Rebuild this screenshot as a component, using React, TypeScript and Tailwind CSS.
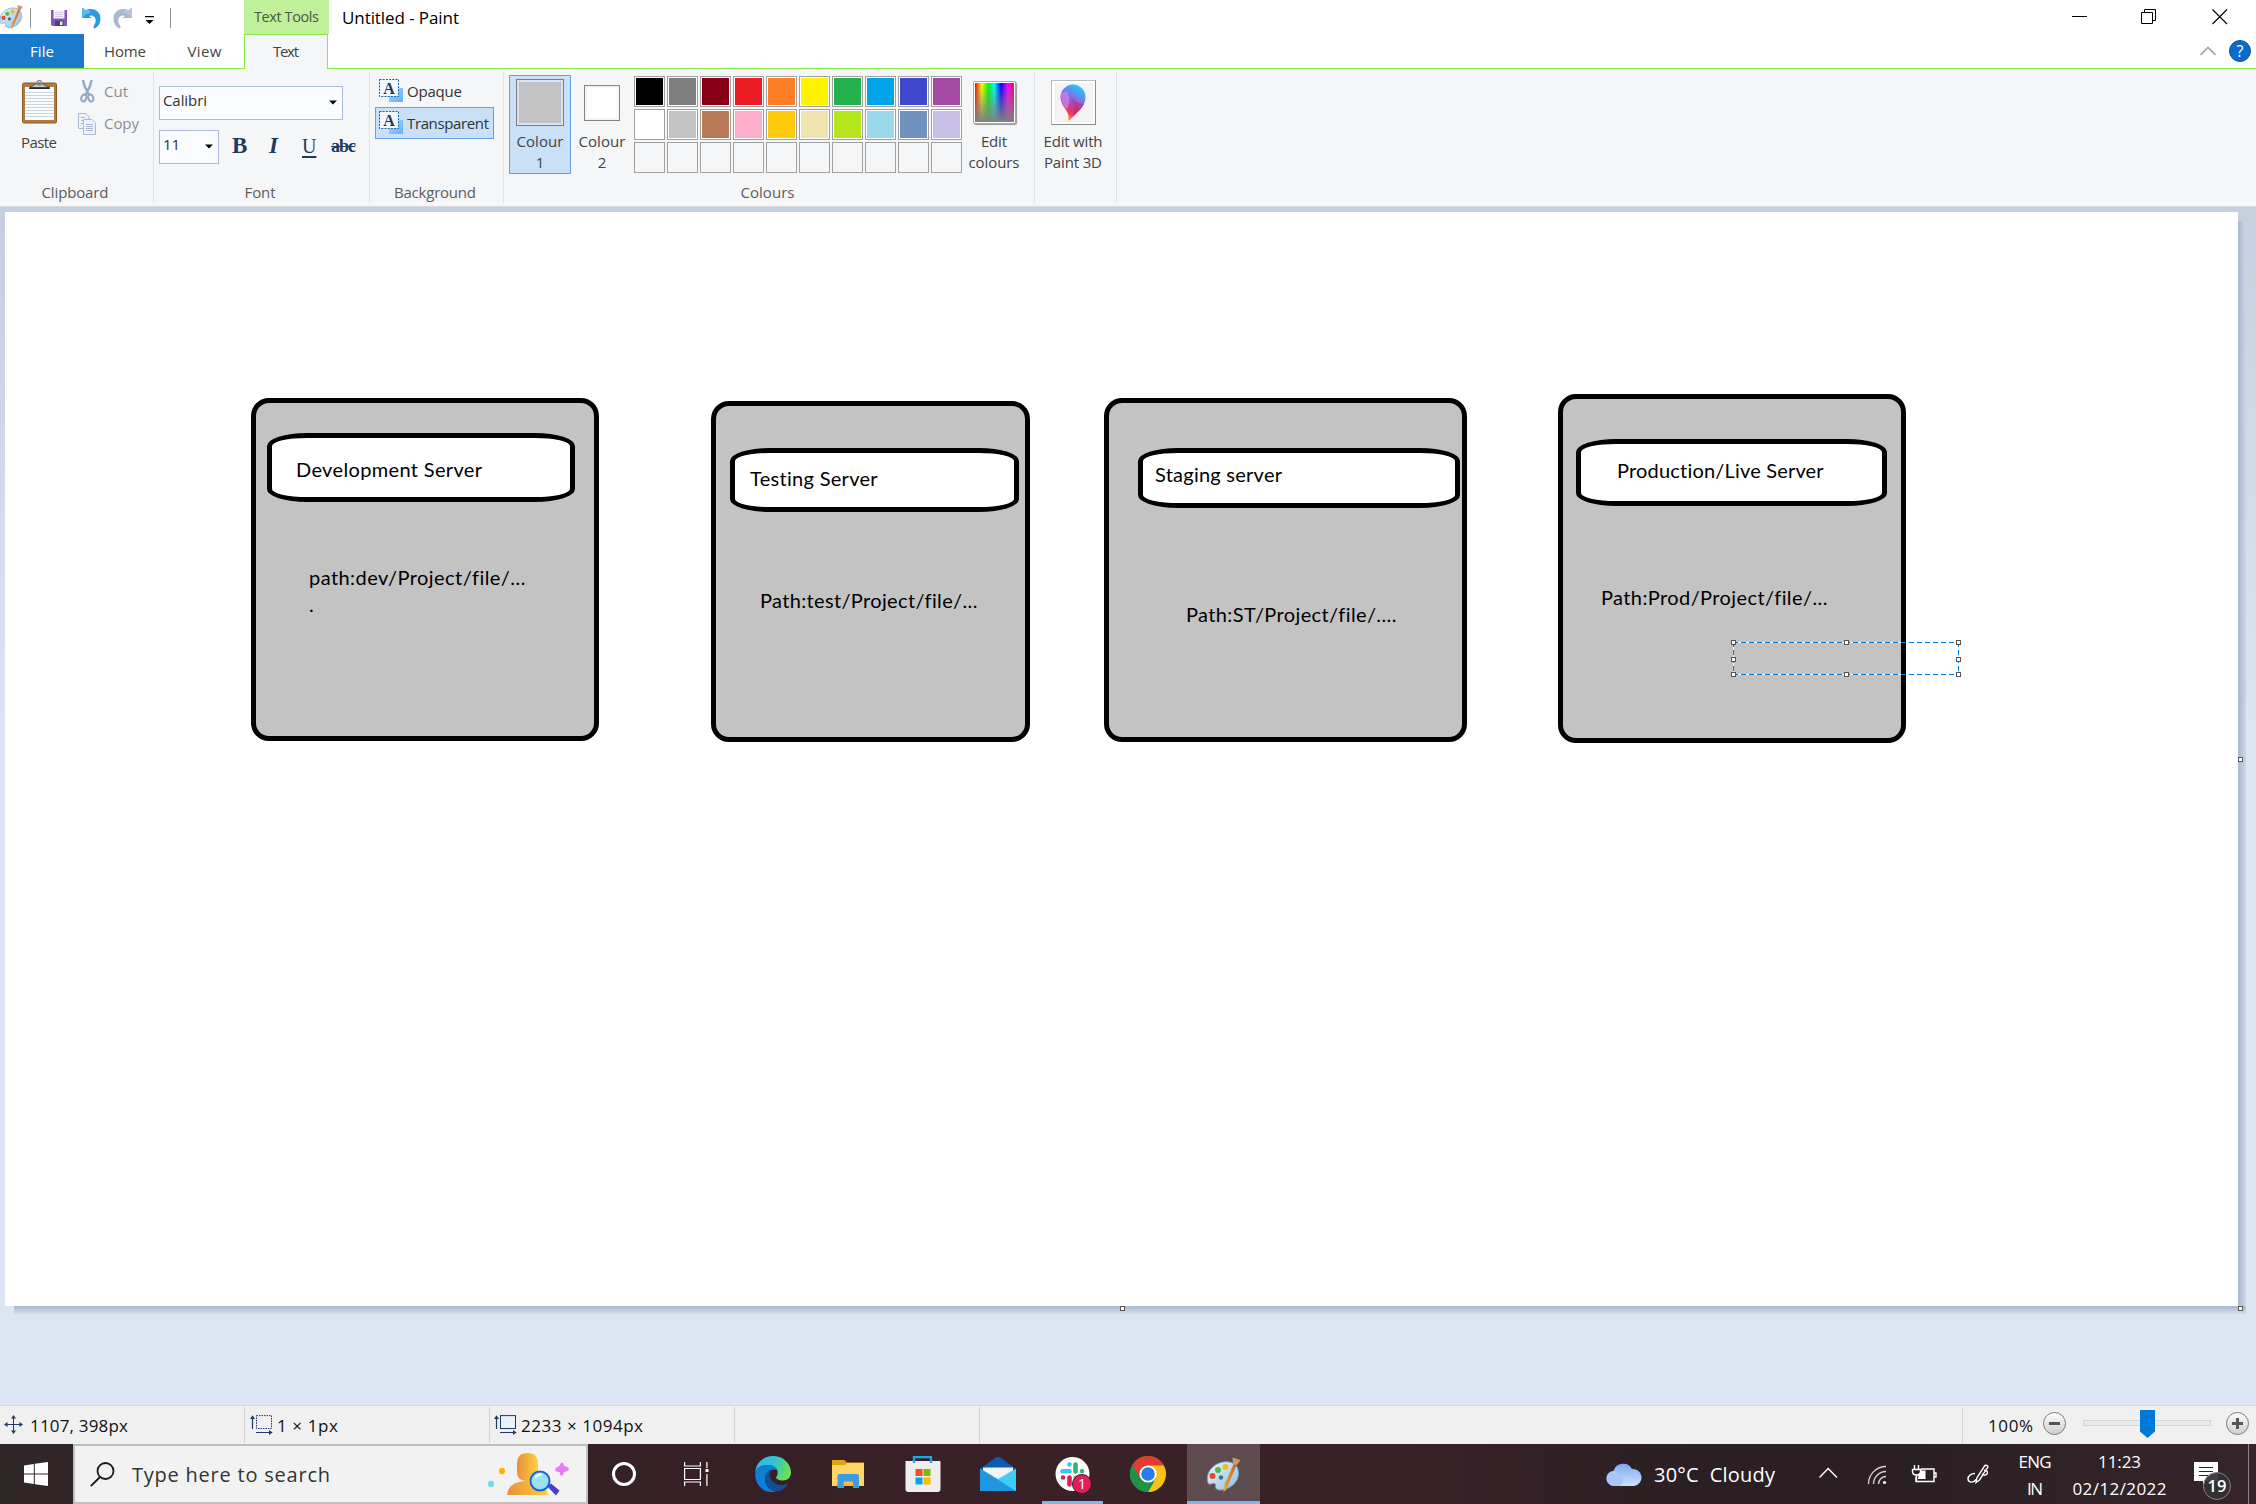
import { useLayoutEffect, useRef, type ReactNode } from "react";

/* Text whose letter spacing is computed so that the run fills a given width. */
function Fit({ w, children, className = "" }: { w: number; children: string; className?: string }) {
  const ref = useRef<HTMLSpanElement>(null);
  useLayoutEffect(() => {
    const el = ref.current;
    if (!el) return;
    el.style.letterSpacing = "0px";
    const natural = el.getBoundingClientRect().width;
    const gaps = Math.max(1, children.length - 1);
    const s = (w - natural) / gaps;
    el.style.letterSpacing = `${s}px`;
    el.style.marginRight = `${-s}px`;
  }, [w, children]);
  return (
    <span ref={ref} className={`inline-block whitespace-pre ${className}`}>
      {children}
    </span>
  );
}

function PaletteIcon({ className }: { className: string }) {
  return (
    <svg viewBox="0 0 36 36" className={className}>
      <defs>
        <linearGradient id="pal" x1="0" y1="0" x2="1" y2="1">
          <stop offset="0" stopColor="#eaf6fd" />
          <stop offset="1" stopColor="#8fc0e0" />
        </linearGradient>
        <linearGradient id="brush" x1="0" y1="0" x2="1" y2="0">
          <stop offset="0" stopColor="#f6a440" />
          <stop offset="1" stopColor="#c4620f" />
        </linearGradient>
      </defs>
      <path
        d="M2 27C-1 18 6 8 17 6c9-1.500 16 3 15.500 12C32 27 24 33 15 34c-4 .3-6-1.500-5.500-4 .4-2-.5-3-3-2.500C4.500 28 3 29 2 27z"
        fill="url(#pal)"
        stroke="#6ea3c8"
        strokeWidth="1"
      />
      <circle cx="15" cy="21.500" r="2.300" fill="#47718f" />
      <circle cx="6.500" cy="20" r="3" fill="#e8472f" />
      <circle cx="12" cy="14" r="3" fill="#53b548" />
      <circle cx="19.500" cy="11" r="3" fill="#f8b818" />
      <circle cx="21" cy="27" r="2.600" fill="#7cc8ee" />
      <path d="M27.500 8l3 1-10.500 25-2.500 2 0-4z" fill="url(#brush)" />
      <path d="M26.500 1.500l8 2.500-3.500 5-4-.5z" fill="#c99a61" />
    </svg>
  );
}

function Undo({ flip = false }: { flip?: boolean }) {
  return (
    <svg viewBox="0 0 19 22" className={flip ? "h-[22px] w-[19px] -scale-x-100" : "h-[22px] w-[19px]"}>
      <path
        d="M0 1.200L1.200 1.200 3.500 3.600C9 0 18.500 3 18.500 11.500 18.500 17 15.500 20.500 12.200 21.500 11 20.500 11.500 19 12.200 18 14.500 14.500 14.500 9.500 9.500 8.500 8.500 8.300 7.800 8.600 7.200 8.900L9.500 11H0z"
        fill={flip ? "#a9b9cf" : "#2b9be0"}
      />
      <path d="M0 1.200L1.200 1.200 3.500 3.600 6 2.600 9 5 3 8 0 11z" fill={flip ? "#b9c6d9" : "#5bbcf2"} />
    </svg>
  );
}

function Caret({ className = "" }: { className?: string }) {
  return (
    <svg viewBox="0 0 8 5" className={`h-[5px] w-[8px] ${className}`}>
      <path d="M0 .5h8L4 4.500z" fill="#000" />
    </svg>
  );
}

function TitleBar() {
  return (
    <header className="flex h-[34px] bg-white text-[#000]">
      <div className="flex w-[244px] items-start">
        <PaletteIcon className="-ml-[1px] mt-[4px] h-[25px] w-[25px]" />
        <div className="ml-[6px] mt-[8px] h-[20px] w-px bg-[#8f8f8f]" />
        <svg viewBox="0 0 16 16" className="ml-[20px] mt-[10px] h-[16px] w-[16px]">
          <path d="M0 0h16v16H1.500L0 14.500z" fill="#8257b4" />
          <path d="M2.500 0h11v8.500h-11z" fill="#f4f1fa" />
          <path d="M4 2.500h8M4 4.500h8M4 6.500h8" stroke="#c9bfdf" strokeWidth=".8" />
          <path d="M4 10.500h8.500V16H4z" fill="#4d4468" />
          <path d="M9 11.500h2.500V15H9z" fill="#e8e6f2" />
        </svg>
        <div className="ml-[15px] mt-[7px]">
          <Undo />
        </div>
        <div className="ml-[12px] mt-[7px]">
          <Undo flip />
        </div>
        <svg viewBox="0 0 9 8" className="ml-[13px] mt-[16px] h-[8px] w-[9px]">
          <path d="M0 0h9v1.200H0zM.5 4h8l-4 4z" fill="#000" />
        </svg>
        <div className="ml-[16px] mt-[8px] h-[20px] w-px bg-[#8f8f8f]" />
      </div>
      <div className="flex w-[85px] justify-center bg-[#c0f09a] text-[14.5px] leading-[33px] text-[#4b5a44]">
        <Fit w={65}>Text Tools</Fit>
      </div>
      <div className="ml-[13px] flex-1 text-[17px] leading-[35px]">
        <Fit w={117}>Untitled - Paint</Fit>
      </div>
      <svg viewBox="0 0 156 16" className="mr-[28px] mt-[9px] h-[16px] w-[156px]" fill="none" stroke="#000">
        <path d="M0 7.500h15" />
        <path d="M69.500 3.500h11v11h-11zM72.500 3V.5h11v11H81" />
        <path d="M140.500 0.500l14.500 14.500M155 .5l-14.500 14.500" strokeWidth="1.100" />
      </svg>
    </header>
  );
}

function Tabs() {
  return (
    <nav className="flex h-[35px] text-[15px] leading-[35px] text-[#444]">
      <div className="flex w-[84px] justify-center bg-[#1979ca] border-b border-[#8ae84a] text-white">
        <Fit w={24}>File</Fit>
      </div>
      <div className="flex w-[82px] justify-center border-b border-[#8ae84a]">
        <Fit w={42}>Home</Fit>
      </div>
      <div className="flex w-[78px] justify-center border-b border-[#8ae84a] pr-[1px]">
        <Fit w={34}>View</Fit>
      </div>
      <div className="flex w-[84px] justify-center border-x border-t border-[#8ae84a] bg-[#f5f6f7] leading-[33px]">
        <Fit w={26}>Text</Fit>
      </div>
      <div className="flex flex-1 justify-end border-b border-[#8ae84a]">
        <svg viewBox="0 0 16 10" className="mt-[12px] h-[10px] w-[16px]">
          <path d="M.5 9L8 1.500 15.500 9" stroke="#a6a6a6" strokeWidth="1.600" fill="none" />
        </svg>
        <div className="ml-[13px] mr-[5px] mt-[6px] flex h-[22px] w-[22px] items-center justify-center rounded-full border border-[#13508f] bg-[#0a6cce] text-[16px] leading-none text-white">
          ?
        </div>
      </div>
    </nav>
  );
}

function Group({ label, labelW, className, children }: { label?: string; labelW?: number; className: string; children: ReactNode }) {
  return (
    <section className={`flex flex-col justify-between ${className}`}>
      <div className="h-[112px]">{children}</div>
      <div className="flex h-[25px] items-start justify-center pr-[3px] text-[15px] leading-[22px] text-[#5c5c5c]">
        {label ? <Fit w={labelW ?? 60}>{label}</Fit> : null}
      </div>
    </section>
  );
}

const Rule = () => <div className="mt-[3px] h-[131px] w-px shrink-0 bg-[#e0e2e4]" />;

function TextFrameIcon() {
  return (
    <svg viewBox="0 0 24 24" className="h-[24px] w-[24px] shrink-0">
      <defs>
        <linearGradient id="tf" x1="0" y1="0" x2="1" y2="1">
          <stop offset="0" stopColor="#a5d4ff" />
          <stop offset="1" stopColor="#62b0fb" />
        </linearGradient>
      </defs>
      <rect x="10" y="9" width="14" height="14" fill="url(#tf)" />
      <rect x=".5" y=".5" width="19" height="17" fill="#f1f8ff" stroke="#1b5f9e" strokeDasharray="2 1.200" />
      <text x="10" y="14.500" textAnchor="middle" fontFamily="Liberation Serif" fontWeight="bold" fontSize="16" fill="#1f3a5f">
        A
      </text>
    </svg>
  );
}

function PasteIcon() {
  return (
    <svg viewBox="0 0 35 44" className="h-[44px] w-[35px]">
      <rect x=".5" y="3" width="34" height="40" rx="1.500" fill="#b07b3e" stroke="#8a5a26" />
      <rect x="3" y="7" width="29" height="33" fill="#fdfdfd" />
      <path d="M3 12.500h29M3 15.500h29M3 18.500h29M3 21.500h29M3 24.500h29M3 27.500h29M3 30.500h29M3 33.500h29M3 36.500h29" stroke="#c5d5e2" />
      <path d="M7.500 8.500c0-3 4-1.500 5.500-4.500h8.500c1.500 3 6 1.500 6 4.500z" fill="#c3c6ca" stroke="#3b3b3b" strokeWidth=".8" />
      <path d="M7.500 8h20" stroke="#222" strokeWidth="1.600" />
      <circle cx="17.300" cy="2.800" r="2.200" fill="none" stroke="#8d9094" strokeWidth="1.500" />
    </svg>
  );
}

function ClipboardGroup() {
  return (
    <Group label="Clipboard" labelW={67} className="w-[153px]">
      <div className="flex">
        <div className="flex w-[78px] flex-col items-center pt-[11px]">
          <PasteIcon />
          <div className="mt-[7px] text-[15px] leading-[22px] text-[#444]">
            <Fit w={36}>Paste</Fit>
          </div>
        </div>
        <div className="flex flex-col gap-[9px] pt-[11px] text-[15px] leading-[23px] text-[#8d8d8d]">
          <div className="flex items-center">
            <svg viewBox="0 0 18 23" className="mr-[8px] h-[23px] w-[18px]" fill="none" stroke="#94a8c4">
              <path d="M5 0l1.500 6 4.500 9M13.500 0L12 6l-4.500 9" strokeWidth="2.400" />
              <ellipse cx="5.800" cy="18" rx="2.400" ry="3.600" strokeWidth="2" transform="rotate(20 5.800 18)" />
              <ellipse cx="12.800" cy="18" rx="2.400" ry="3.600" strokeWidth="2" transform="rotate(-20 12.800 18)" />
            </svg>
            <Fit w={24}>Cut</Fit>
          </div>
          <div className="flex items-center">
            <svg viewBox="0 0 18 22" className="mr-[8px] h-[22px] w-[18px]" fill="#eef3fa" stroke="#a9b9d6">
              <path d="M.5.500H8l3 3V15.500H.5z" />
              <path d="M3 4.500h4M3 7.500h4M3 10.500h4" />
              <path d="M5.500 6.500H14l3.500 3.500V21.500h-12z" />
              <path d="M8 11.500h7M8 13.500h7M8 15.500h7M8 17.500h7" />
            </svg>
            <Fit w={35}>Copy</Fit>
          </div>
        </div>
      </div>
    </Group>
  );
}

function FontGroup() {
  return (
    <Group label="Font" labelW={31} className="w-[215px]">
      <div className="flex flex-col gap-[10px] pl-[5px] pt-[17px] text-[15px] text-[#333]">
        <div className="flex h-[34px] w-[184px] items-center justify-between border border-[#abbad9] bg-[#fbfcff] pl-[3px] pr-[5px]">
          <Fit w={44} className="-mt-[5px]">
            Calibri
          </Fit>
          <Caret className="-mt-[2px]" />
        </div>
        <div className="flex items-center">
          <div className="flex h-[34px] w-[60px] items-center justify-between border border-[#abbad9] bg-[#fbfcff] pl-[3px] pr-[5px]">
            <Fit w={17} className="-mt-[6px]">
              11
            </Fit>
            <Caret className="-mt-[2px]" />
          </div>
          <div className="-mt-[2px] flex items-center font-['Liberation_Serif',serif] leading-[24px] text-[#1f3a5f]">
            <span className="ml-[13px] w-[37px] text-[23px] font-bold">B</span>
            <span className="w-[33px] text-[23px] font-bold italic">I</span>
            <span className="w-[29px] text-[20px] underline underline-offset-[3px]">U</span>
            <Fit w={25} className="text-[18px] font-bold line-through">
              abc
            </Fit>
          </div>
        </div>
      </div>
    </Group>
  );
}

function BackgroundGroup() {
  return (
    <Group label="Background" labelW={82} className="w-[133px]">
      <div className="flex flex-col pl-[5px] pt-[6px] text-[15px] text-[#333]">
        <div className="flex h-[32px] items-center pl-[4px]">
          <TextFrameIcon />
          <Fit w={55} className="ml-[4px]">
            Opaque
          </Fit>
        </div>
        <div className="flex h-[32px] w-[119px] items-center border border-[#62a2e4] bg-[#c9e0f7] pl-[3px]">
          <TextFrameIcon />
          <Fit w={82} className="ml-[4px]">
            Transparent
          </Fit>
        </div>
      </div>
    </Group>
  );
}

const swatches = [
  "bg-[#000000]", "bg-[#7f7f7f]", "bg-[#880015]", "bg-[#ed1c24]", "bg-[#ff7f27]", "bg-[#fff200]", "bg-[#22b14c]", "bg-[#00a2e8]", "bg-[#3f48cc]", "bg-[#a349a4]",
  "bg-[#ffffff]", "bg-[#c3c3c3]", "bg-[#b97a57]", "bg-[#ffaec9]", "bg-[#ffc90e]", "bg-[#efe4b0]", "bg-[#b5e61d]", "bg-[#99d9ea]", "bg-[#7092be]", "bg-[#c8bfe7]",
];

function TwoLine({ a, aw, b, bw }: { a: string; aw: number; b: string; bw: number }) {
  return (
    <div className="flex flex-col items-center text-[15px] leading-[21px] text-[#444]">
      <Fit w={aw}>{a}</Fit>
      <Fit w={bw}>{b}</Fit>
    </div>
  );
}

function ColoursGroup() {
  return (
    <Group label="Colours" labelW={54} className="w-[530px]">
      <div className="flex pl-[5px] pt-[6px]">
        <div className="flex h-[99px] w-[62px] flex-col items-center border border-[#62a2e4] bg-[#c9e0f7] pt-[3px]">
          <div className="mb-[5px] h-[48px] w-[48px] border border-[#7d7d7d] bg-[#d6e4f2] p-[2px]">
            <div className="h-full w-full bg-[#c3c3c3]" />
          </div>
          <TwoLine a="Colour" aw={47} b="1" bw={9} />
        </div>
        <div className="flex w-[62px] flex-col items-center pt-[10px]">
          <div className="mb-[10px] h-[36px] w-[36px] border border-[#858585] bg-white shadow-[inset_0_0_0_2px_#f3f3f3]" />
          <TwoLine a="Colour" aw={47} b="2" bw={9} />
        </div>
        <div className="ml-[1px] grid h-[97px] grid-cols-10 gap-[2px] pt-[1px]">
          {swatches.map((c) => (
            <div key={c} className="h-[31px] w-[31px] border border-[#a0a0a0] bg-white p-px">
              <div className={`h-full w-full ${c}`} />
            </div>
          ))}
          {Array.from({ length: 10 }, (_, i) => (
            <div key={i} className="h-[31px] w-[31px] border border-[#a0a0a0]" />
          ))}
        </div>
        <div className="flex w-[64px] flex-col items-center pt-[6px]">
          <div className="mb-[7px] h-[43px] w-[43px] rounded-[2px] border border-[#a5a5a5] bg-white p-px shadow-[1px_1px_1px_#999]">
            <div className="h-full w-full bg-[linear-gradient(to_right,#f00,#ff0_17%,#0f0_34%,#0ff_50%,#00f_67%,#f0f_84%,#f0006a)]">
              <div className="h-full w-full bg-linear-to-b from-[#80808000] to-[#808080]" />
            </div>
          </div>
          <TwoLine a="Edit" aw={26} b="colours" bw={51} />
        </div>
      </div>
    </Group>
  );
}

function Paint3DGroup() {
  return (
    <Group className="w-[81px]">
      <div className="flex flex-col items-center pr-[5px] pt-[11px]">
        <div className="mb-[6px] flex h-[45px] w-[45px] items-center justify-center border border-[#8a8a8a] border-l-[#bbb] border-t-[#bbb] bg-[#f3f3f3] shadow-[inset_0_0_0_2px_#fff]">
          <svg viewBox="0 0 26 37" className="h-[37px] w-[26px]">
            <defs>
              <linearGradient id="p3" x1=".7" y1="0" x2=".3" y2="1">
                <stop offset="0" stopColor="#19d3f3" />
                <stop offset=".35" stopColor="#7b74ee" />
                <stop offset=".62" stopColor="#c63a8c" />
                <stop offset=".8" stopColor="#ef3b5e" />
                <stop offset="1" stopColor="#ffb51c" />
              </linearGradient>
            </defs>
            <path d="M13 .5C20 .5 25.500 6 25.500 13.500 25.500 23 17 28 9.500 36.500 8.500 37 8 36 8.500 34 9.500 27 .5 22 .5 13.500.500 6 6 .5 13 .5z" fill="url(#p3)" />
            <path d="M1.500 9C0 16 2 21 7 25c3-5 3-12 0-18z" fill="#c98bf5" opacity=".7" />
            <path d="M12 14c4 4 7 6 12 6-2 5-7 8-11 12 2-6 1-12-1-18z" fill="#b52f6c" opacity=".55" />
          </svg>
        </div>
        <TwoLine a="Edit with" aw={59} b="Paint 3D" bw={58} />
      </div>
    </Group>
  );
}

interface Server {
  box: string;
  plate: string;
  title: string;
  titleW: number;
  titlePos: string;
  path: string;
  pathW: number;
  pathPos: string;
  extra?: string;
}

/* Drawn shapes, placed in canvas pixels. */
const servers: Server[] = [
  { box: "left-[246px] top-[186px] h-[343px] w-[348px]", plate: "left-[262px] top-[221px] h-[69px] w-[308px]", title: "Development Server", titleW: 186, titlePos: "left-[291px] top-[244px]", path: "path:dev/Project/file/...", pathW: 216, pathPos: "left-[304px] top-[352px]", extra: "." },
  { box: "left-[706px] top-[189px] h-[341px] w-[319px]", plate: "left-[725px] top-[236px] h-[64px] w-[289px]", title: "Testing Server", titleW: 128, titlePos: "left-[745px] top-[253px]", path: "Path:test/Project/file/...", pathW: 217, pathPos: "left-[755px] top-[375px]" },
  { box: "left-[1099px] top-[186px] h-[344px] w-[363px]", plate: "left-[1133px] top-[236px] h-[60px] w-[322px]", title: "Staging server", titleW: 127, titlePos: "left-[1150px] top-[249px]", path: "Path:ST/Project/file/....", pathW: 210, pathPos: "left-[1181px] top-[389px]" },
  { box: "left-[1553px] top-[182px] h-[349px] w-[348px]", plate: "left-[1571px] top-[227px] h-[67px] w-[311px]", title: "Production/Live Server", titleW: 207, titlePos: "left-[1612px] top-[245px]", path: "Path:Prod/Project/file/...", pathW: 226, pathPos: "left-[1596px] top-[372px]" },
];

const Handle = ({ className }: { className: string }) => <div className={`absolute h-[5px] w-[5px] border border-[#555] bg-white ${className}`} />;

const dashX = "bg-[repeating-linear-gradient(to_right,#0078d7_0_5px,#fff_5px_8px)]";
const dashY = "bg-[repeating-linear-gradient(to_bottom,#0078d7_0_5px,#fff_5px_8px)]";

function Canvas() {
  return (
    <main className="relative h-[1198px] bg-linear-to-b from-[#c5cfdf] to-[#dce6f2] to-45% pl-[5px] pt-[5px]">
      <div className="absolute left-[2238px] top-[14px] h-[1085px] w-[8px] bg-linear-to-r from-[#a9b7ce] to-[#ccd7e6]" />
      <div className="absolute left-[14px] top-[1099px] h-[8px] w-[2232px] bg-linear-to-b from-[#a9b7ce] to-[#d3deea]" />
      <Handle className="left-[2238px] top-[1099px]" />
      <Handle className="left-[1120px] top-[1099px]" />
      <Handle className="left-[2238px] top-[550px]" />
      <div className="relative h-[1094px] w-[2233px] bg-white font-['Lato',sans-serif] text-[20px] leading-[27px] text-black">
        {servers.map((s) => (
          <div key={s.title}>
            <div className={`absolute rounded-[18px] border-[5px] border-black bg-[#c3c3c3] ${s.box}`} />
            <div className={`absolute rounded-[40px/13px] border-[5px] border-black bg-white ${s.plate}`} />
            <div className={`absolute ${s.titlePos}`}>
              <Fit w={s.titleW}>{s.title}</Fit>
            </div>
            <div className={`absolute flex flex-col ${s.pathPos}`}>
              <Fit w={s.pathW}>{s.path}</Fit>
              {s.extra ? <span>{s.extra}</span> : null}
            </div>
          </div>
        ))}
        <div className="absolute left-[1728px] top-[430px] h-[33px] w-[226px]">
          <div className={`absolute left-0 top-0 h-px w-full ${dashX}`} />
          <div className={`absolute bottom-0 left-0 h-px w-full ${dashX}`} />
          <div className={`absolute left-0 top-0 h-full w-px ${dashY}`} />
          <div className={`absolute right-0 top-0 h-full w-px ${dashY}`} />
          <Handle className="-left-[2px] -top-[2px]" />
          <Handle className="-top-[2px] left-[111px]" />
          <Handle className="-right-[2px] -top-[2px]" />
          <Handle className="-left-[2px] top-[15px]" />
          <Handle className="-right-[2px] top-[15px]" />
          <Handle className="-bottom-[2px] -left-[2px]" />
          <Handle className="-bottom-[2px] left-[111px]" />
          <Handle className="-bottom-[2px] -right-[2px]" />
        </div>
      </div>
    </main>
  );
}

function ZoomButton({ plus = false }: { plus?: boolean }) {
  return (
    <div className="flex h-[23px] w-[23px] items-center justify-center rounded-full border border-[#7d7d7d] bg-linear-to-b from-[#fdfdfd] to-[#cfcfcf]">
      <svg viewBox="0 0 11 11" className="h-[11px] w-[11px]" fill="#555">
        <path d="M0 4h11v3H0z" />
        {plus ? <path d="M4 0h3v11H4z" /> : null}
      </svg>
    </div>
  );
}

function SizeIcon({ dashed = false }: { dashed?: boolean }) {
  return (
    <svg viewBox="0 0 23 20" className="h-[20px] w-[23px]" fill="none" stroke="#1f3a5f">
      {dashed ? <rect x="6.500" y=".6" width="15" height="12.900" strokeDasharray="1.500 1" /> : <rect x="6.500" y=".6" width="15" height="12.900" fill="#e8f4fa" />}
      <path d="M2.500 14V2M6 17.500h15" strokeWidth="1.200" />
      <path d="M0 4L2.500.300 5 4zM19 15l3.700 2.500L19 20z" fill="#1f3a5f" stroke="none" />
    </svg>
  );
}

const StatusRule = () => <div className="mt-px h-[36px] w-px bg-[#d4d4d4]" />;

function StatusBar() {
  return (
    <footer className="flex h-[39px] border-t border-[#d7d7d7] bg-[#f0f0f0] text-[17px] leading-[39px] text-[#111]">
      <div className="flex w-[244px] pl-[4px]">
        <svg viewBox="0 0 19 19" className="mt-[9px] h-[19px] w-[19px]" stroke="#1f3a5f" fill="#1f3a5f">
          <path d="M9.500 2v15M2 9.500h15" />
          <path d="M7 3.500L9.500 0 12 3.500zM7 15.500L9.500 19l2.500-3.500zM3.500 7L0 9.500 3.500 12zM15.500 7L19 9.500 15.500 12z" stroke="none" />
        </svg>
        <Fit w={98} className="ml-[7px]">
          1107, 398px
        </Fit>
      </div>
      <StatusRule />
      <div className="flex w-[244px] pl-[5px]">
        <div className="mt-[9px] h-[20px]">
          <SizeIcon dashed />
        </div>
        <Fit w={61} className="ml-[4px]">
          1 × 1px
        </Fit>
      </div>
      <StatusRule />
      <div className="flex w-[244px] pl-[4px]">
        <div className="mt-[9px] h-[20px]">
          <SizeIcon />
        </div>
        <Fit w={122} className="ml-[4px]">
          2233 × 1094px
        </Fit>
      </div>
      <StatusRule />
      <div className="w-[244px]" />
      <StatusRule />
      <div className="flex-1" />
      <StatusRule />
      <div className="flex w-[293px] pl-[25px]">
        <div className="w-[55px]">
          <Fit w={45}>100%</Fit>
        </div>
        <div className="mt-[6px]">
          <ZoomButton />
        </div>
        <svg viewBox="0 0 128 28" className="ml-[17px] mr-[15px] mt-[4px] h-[28px] w-[128px]">
          <rect x=".5" y="10.500" width="127" height="5" fill="#e7eaea" stroke="#d2d5d5" />
          <path d="M57 0h15v21.500L64.500 28 57 21.500z" fill="#0078d7" />
        </svg>
        <div className="mt-[6px]">
          <ZoomButton plus />
        </div>
      </div>
    </footer>
  );
}

function EdgeIcon() {
  return (
    <svg viewBox="0 0 36 36" className="h-[36px] w-[36px]">
      <defs>
        <linearGradient id="e1" x1="0" y1=".2" x2="1" y2=".5">
          <stop offset="0" stopColor="#35b8f1" />
          <stop offset=".5" stopColor="#2fc5cf" />
          <stop offset="1" stopColor="#6ee04a" />
        </linearGradient>
        <linearGradient id="e2" x1="0" y1="0" x2=".3" y2="1">
          <stop offset="0" stopColor="#1280cf" />
          <stop offset="1" stopColor="#0b7fe0" />
        </linearGradient>
      </defs>
      <path d="M.3 16C1 7 8.500 0 18 0c10 0 18 7.500 18 16.500 0 5-3.500 8-8 8-4 0-7-1.500-7-3 0-1 1.700-1.500 1.700-5C22.700 12 18 9 12.500 9 7 9 2 11.500.3 16z" fill="url(#e1)" />
      <path d="M.3 16C2 11.500 7 9 12.500 9c5 0 8.500 2 9.800 5C16 12 9.500 17 10 24c.5 6 5 10.500 11 11.500C9 38-1 29 .3 16z" fill="url(#e2)" />
      <path d="M10 24c-.4-5 2.500-9.500 7-10.500-4.500 5-2 14 8 15.500 3 .4 5.500-.5 7.500-1.500.5-.2.800.1.500.6C30 33 25.500 35.500 21 35.500 15 34.500 10.500 30 10 24z" fill="#124f94" />
    </svg>
  );
}

function FolderIcon() {
  return (
    <svg viewBox="0 0 32 28" className="h-[28px] w-[32px]">
      <path d="M0 0h12.500l2 2.500H32V8H0z" fill="#e0a30f" />
      <path d="M0 5h13l2-2h17v23H0z" fill="#ffd566" />
      <path d="M5.500 16q0-2 2-2h17.500q2 0 2 2v12h-6v-6h-9v6h-6.500z" fill="#3d9be3" />
      <path d="M11.500 26v-4.500h9.500V26z" fill="#f5bd3a" />
    </svg>
  );
}

function StoreIcon() {
  return (
    <svg viewBox="0 0 36 36" className="h-[36px] w-[36px]">
      <path d="M9 7V1.200h17V7" fill="none" stroke="#1ba7e8" strokeWidth="2.300" />
      <path d="M.5 5h35v28q0 3-3 3h-29q-3 0-3-3z" fill="#eeeeee" />
      <path d="M9 7V4M26 7V4" stroke="#1ba7e8" strokeWidth="2.300" />
      <path d="M10.500 13h7v7h-7z" fill="#f25022" />
      <path d="M18.500 13h7v7h-7z" fill="#7fba00" />
      <path d="M10.500 21.500h7v7h-7z" fill="#00a4ef" />
      <path d="M18.500 21.500h7v7h-7z" fill="#ffb900" />
    </svg>
  );
}

function MailIcon() {
  return (
    <svg viewBox="0 0 36 34" className="h-[34px] w-[36px]">
      <path d="M0 12L15 1q3-2 6 0l15 11z" fill="#0a5cae" />
      <path d="M3 10.500h30V24H3z" fill="#f2f4f6" />
      <path d="M0 11.500L18 22 36 11.500V34H0z" fill="#41cbf7" />
      <path d="M0 11.500L36 34H0z" fill="#2196df" />
    </svg>
  );
}

function SlackIcon() {
  return (
    <svg viewBox="0 0 38 38" className="h-[38px] w-[38px]">
      <circle cx="17.500" cy="18" r="17" fill="#fff" />
      <g strokeWidth="4.600" strokeLinecap="round">
        <path d="M7.500 15.200h7M14.500 8.500h.01" stroke="#36c5f0" />
        <path d="M20.500 8.500v7M27 15.200h.01" stroke="#2eb67d" />
        <path d="M14.500 21.500v7M8 21.500h.01" stroke="#e01e5a" />
        <path d="M20.500 21.500h7" stroke="#ecb22e" />
      </g>
      <circle cx="27" cy="28" r="9.500" fill="#e01e5a" stroke="#3a1a25" strokeWidth="1" />
      <text x="27" y="33" textAnchor="middle" fontSize="14" fontFamily="Open Sans" fill="#fff">
        1
      </text>
    </svg>
  );
}

function ChromeIcon() {
  return (
    <svg viewBox="0 0 36 36" className="h-[36px] w-[36px]">
      <circle cx="18" cy="18" r="18" fill="#1f9247" />
      <path d="M18 18L2.400 9A18 18 0 0 1 33.600 9z" fill="#e33b2e" />
      <path d="M18 9.500H33.800A18 18 0 0 1 18 36L25.500 22z" fill="#fcc117" />
      <path d="M2.400 9L10.500 23 18 12z" fill="#e33b2e" />
      <path d="M2.400 9L10.300 22.500 14 26 24 26 18 36A18 18 0 0 1 2.400 9z" fill="#1f9247" />
      <circle cx="18" cy="18" r="8.600" fill="#fff" />
      <circle cx="18" cy="18" r="6.800" fill="#2a7bea" />
    </svg>
  );
}

function SearchArt() {
  return (
    <svg viewBox="0 0 82 44" className="h-[44px] w-[82px]">
      <defs>
        <linearGradient id="body" x1="0" y1="0" x2="1" y2="0">
          <stop offset="0" stopColor="#e98f3b" />
          <stop offset="1" stopColor="#ffd03f" />
        </linearGradient>
      </defs>
      <ellipse cx="14" cy="19" rx="3" ry="3.200" fill="#ffb000" />
      <ellipse cx="3" cy="32" rx="3" ry="3.200" fill="#6fdbe9" />
      <path d="M74 10.500q1.500 0 2 3.500 4.500 1 5 3-.5 2-5 3-1 4-2.500 4-1.500-1-2-4-4.500-.5-4.500-2.500.5-2 4.500-3.500 1-3.500 2.500-3.500z" fill="#e57bf5" />
      <path d="M19 43c1-9 8-14 20-14s20 5 21 14z" fill="url(#body)" />
      <path d="M29 12q0-11 10.500-11T50 12v8q0 9-10.500 9T29 20z" fill="url(#body)" />
      <path d="M59 34l4-2.500 8.500 7-3.500 5z" fill="#4a3bd4" />
      <ellipse cx="52" cy="29" rx="9.500" ry="9.500" fill="#9fe0f7" stroke="#1565d8" strokeWidth="2" />
      <path d="M48 25q2-3 5-2.500" stroke="#fff" strokeWidth="2" fill="none" strokeLinecap="round" />
    </svg>
  );
}

function TaskCell({ className = "w-[75px]", children }: { className?: string; children: ReactNode }) {
  return <div className={`flex h-[60px] items-center justify-center ${className}`}>{children}</div>;
}

function Taskbar() {
  return (
    <div className="flex h-[60px] bg-[linear-gradient(to_right,#2f2627,#362025_30%,#3a2127_48%,#382127_62%,#2a2023_75%,#2a2023_85%,#36252a)] text-white">
      <div className="flex w-[73px] items-center justify-center pr-[1px]">
        <svg viewBox="0 0 24 24" className="h-[24px] w-[24px]" fill="#fff">
          <path d="M0 3.400l9.800-1.400v9.500H0zM10.800 1.800L24 0v11.500H10.800zM0 12.500h9.800V22L0 20.600zM10.800 12.500H24V24l-13.200-1.800z" />
        </svg>
      </div>
      <div className="flex h-[60px] w-[515px] items-center border-2 border-[#bfbfbf] bg-[#f2f2f2] pl-[15px] text-[20px] text-[#333]">
        <svg viewBox="0 0 25 25" className="h-[25px] w-[25px]" fill="none" stroke="#1a1a1a" strokeWidth="1.800">
          <circle cx="15.500" cy="9" r="8" />
          <path d="M10 15L.8 24.200" />
        </svg>
        <div className="ml-[17px] w-[356px] pt-[2px]">
          <Fit w={198}>Type here to search</Fit>
        </div>
        <SearchArt />
      </div>
      <TaskCell className="w-[72px]">
        <div className="h-[24px] w-[24px] rounded-full border-[3px] border-white" />
      </TaskCell>
      <TaskCell className="w-[75px] pr-[3px]">
        <svg viewBox="0 0 25 24" className="h-[24px] w-[25px]" fill="none" stroke="#fff" strokeWidth="1.200">
          <path d="M.6 0v4h15.800V0M.6 6.500h15.800v11H.6zM.6 24v-4h15.800v4M22.900 0v6M22.900 12v12" />
          <path d="M21.500 7h3v3h-3z" fill="#fff" stroke="none" />
        </svg>
      </TaskCell>
      <TaskCell>
        <EdgeIcon />
      </TaskCell>
      <TaskCell>
        <FolderIcon />
      </TaskCell>
      <TaskCell>
        <StoreIcon />
      </TaskCell>
      <TaskCell className="w-[75px] pb-[1px]">
        <MailIcon />
      </TaskCell>
      <TaskCell>
        <div className="flex h-full w-[61px] items-center justify-center border-b-[3px] border-[#76b9ed] pl-[3px] pt-[5px]">
          <SlackIcon />
        </div>
      </TaskCell>
      <TaskCell>
        <ChromeIcon />
      </TaskCell>
      <div className="ml-[2px] flex h-full w-[73px] items-center justify-center border-b-[3px] border-[#76b9ed] bg-[#5e4b50] pt-[2px]">
        <PaletteIcon className="h-[36px] w-[36px]" />
      </div>
      <div className="flex-1" />
      <svg viewBox="0 0 36 25" className="mt-[17px] h-[25px] w-[36px]">
        <defs>
          <linearGradient id="cl" x1="0" y1="0" x2="0" y2="1">
            <stop offset="0" stopColor="#7fa8f0" />
            <stop offset="1" stopColor="#cfe0ff" />
          </linearGradient>
        </defs>
        <path d="M8 25a7.500 7.500 0 0 1-.5-14.900A10 10 0 0 1 26 8a8.500 8.500 0 0 1 2 17z" fill="url(#cl)" />
        <path d="M8 25a7.500 7.500 0 1 1 5-13q5 3 4 8-1 4-4 5z" fill="#a9c5fa" />
      </svg>
      <div className="ml-[12px] w-[165px] pt-[1px] text-[20px] leading-[60px]">
        <Fit w={121}>30°C  Cloudy</Fit>
      </div>
      <svg viewBox="0 0 170 60" className="h-[60px] w-[170px]" fill="none" stroke="#fff" strokeWidth="1.400">
        <path d="M.5 33.500l8.700-9 8.700 9" />
        <path d="M49.500 40A17.500 17.500 0 0 1 67 22.500M54.500 40A12.500 12.500 0 0 1 67 27.500M59.500 40A7.500 7.500 0 0 1 67 32.500" stroke="#d5d0d1" />
        <circle cx="65.500" cy="38.500" r="1.600" fill="#fff" stroke="none" />
        <path d="M102 25h13v12.500H97v-5M115.500 29h1.500v4h-1.500" />
        <path d="M100 26.500h6.500V35H99z" fill="#fff" stroke="none" />
        <path d="M95.500 21v4.500M99.500 21v4.500M93.500 25.500h8v2q0 3.500-4 3.500t-4-3.500zM97.500 31v6" fill="#2a2023" />
        <path d="M157 38.500l.8-4.500 8-12.500q2.500-1 3.200 1.500l-8.500 13z" />
        <path d="M156 29.500c-4 0-7 2.500-7 5.500s5 5 8 .5M163 30c3 2.500 5.500.5 5.500-1.500s-2-2.500-3.500-2" />
      </svg>
      <div className="ml-[21px] flex w-[54px] flex-col items-center pr-[4px] pt-[4px] text-[17px] leading-[27px]">
        <Fit w={33}>ENG</Fit>
        <Fit w={16}>IN</Fit>
      </div>
      <div className="flex w-[114px] flex-col items-center pr-[3px] pt-[4px] text-[17px] leading-[27px]">
        <Fit w={43}>11:23</Fit>
        <Fit w={94}>02/12/2022</Fit>
      </div>
      <svg viewBox="0 0 70 60" className="h-[60px] w-[70px]">
        <path d="M16 18h24v19H28l-3 4v-4h-9z" fill="#fff" />
        <path d="M21 23.500h14M21 27.500h14M21 31.500h9" stroke="#2b2225" strokeWidth="1.200" />
        <circle cx="39" cy="42" r="13.500" fill="#333" fillOpacity=".93" stroke="#8a8284" />
        <text x="39" y="48" textAnchor="middle" fontSize="16.500" fontWeight="600" fontFamily="Open Sans" fill="#fff">
          19
        </text>
      </svg>
      <div className="mr-[7px] h-full w-px bg-[#8c8285]" />
    </div>
  );
}

export default function App() {
  return (
    <div className="h-[1504px] w-[2256px] overflow-hidden bg-white font-['Open_Sans',sans-serif]">
      <TitleBar />
      <Tabs />
      <div className="flex h-[138px] border-b border-[#d9dadb] bg-[#f5f6f7]">
        <ClipboardGroup />
        <Rule />
        <FontGroup />
        <Rule />
        <BackgroundGroup />
        <Rule />
        <ColoursGroup />
        <Rule />
        <Paint3DGroup />
        <Rule />
      </div>
      <Canvas />
      <StatusBar />
      <Taskbar />
    </div>
  );
}
